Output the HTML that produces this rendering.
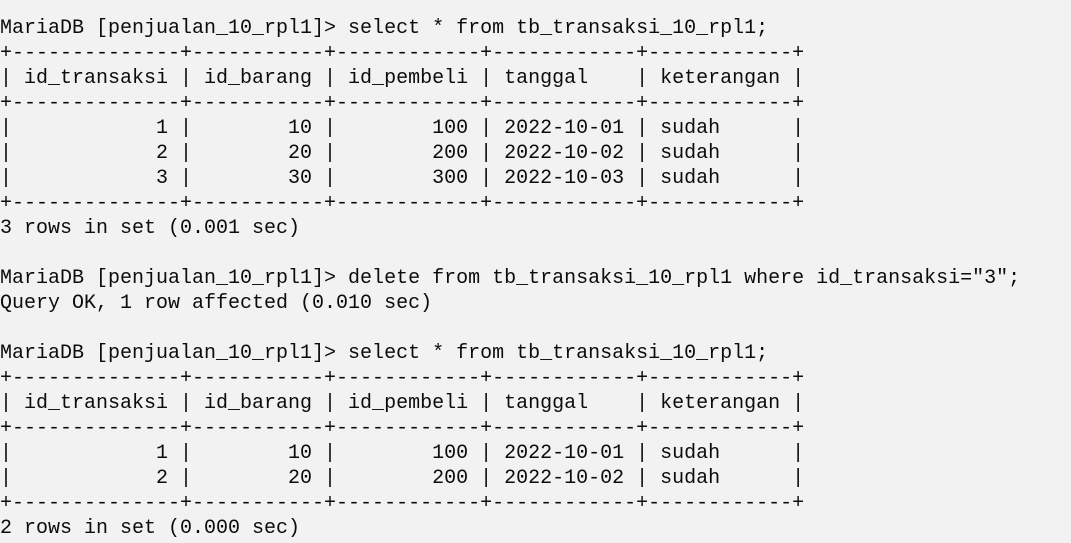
<!DOCTYPE html>
<html><head><style>
html,body{margin:0;padding:0;background:#f2f2f2;width:1071px;height:543px;overflow:hidden}
pre{margin:0;position:absolute;left:0;top:16px;font-family:"Liberation Mono",monospace;font-size:20px;line-height:25px;color:#0c0c0c;letter-spacing:0}
</style></head><body><pre>MariaDB [penjualan_10_rpl1]&gt; select * from tb_transaksi_10_rpl1;
+--------------+-----------+------------+------------+------------+
| id_transaksi | id_barang | id_pembeli | tanggal    | keterangan |
+--------------+-----------+------------+------------+------------+
|            1 |        10 |        100 | 2022-10-01 | sudah      |
|            2 |        20 |        200 | 2022-10-02 | sudah      |
|            3 |        30 |        300 | 2022-10-03 | sudah      |
+--------------+-----------+------------+------------+------------+
3 rows in set (0.001 sec)

MariaDB [penjualan_10_rpl1]&gt; delete from tb_transaksi_10_rpl1 where id_transaksi="3";
Query OK, 1 row affected (0.010 sec)

MariaDB [penjualan_10_rpl1]&gt; select * from tb_transaksi_10_rpl1;
+--------------+-----------+------------+------------+------------+
| id_transaksi | id_barang | id_pembeli | tanggal    | keterangan |
+--------------+-----------+------------+------------+------------+
|            1 |        10 |        100 | 2022-10-01 | sudah      |
|            2 |        20 |        200 | 2022-10-02 | sudah      |
+--------------+-----------+------------+------------+------------+
2 rows in set (0.000 sec)</pre></body></html>
